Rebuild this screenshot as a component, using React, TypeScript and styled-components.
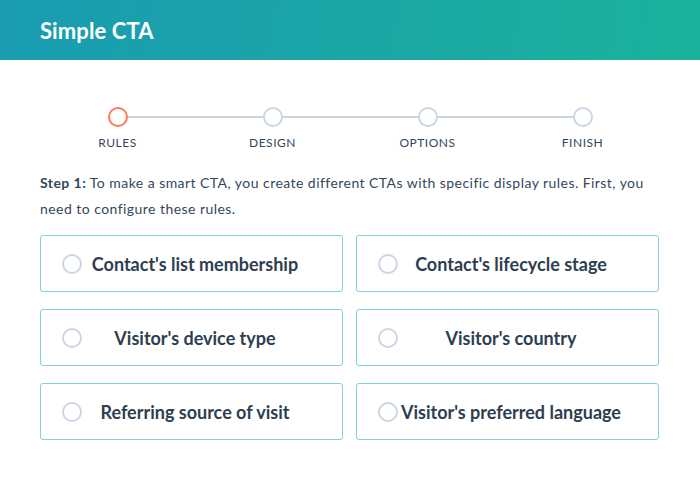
import React, { useState } from "react";
import styled, { createGlobalStyle } from "styled-components";

const GlobalStyle = createGlobalStyle`
  html, body {
    margin: 0;
    padding: 0;
    background: #fff;
  }
  body {
    font-family: "Lato", "Open Sans", sans-serif;
    color: #33475b;
  }
`;

const steps = ["Rules", "Design", "Options", "Finish"];

const rules = [
  "Contact's list membership",
  "Contact's lifecycle stage",
  "Visitor's device type",
  "Visitor's country",
  "Referring source of visit",
  "Visitor's preferred language",
];

const Root = styled.div`
  width: 700px;
  height: 480px;
  overflow: hidden;
`;

const Header = styled.header`
  height: 60px;
  display: flex;
  align-items: center;
  padding: 0 40px;
  background: linear-gradient(100deg, #1a9bb1 0%, #1ab29c 100%);
`;

const Title = styled.h1`
  margin: 0;
  font-size: 22px;
  font-weight: 700;
  color: #fff;
  letter-spacing: 0.1px;
`;

const Body = styled.main`
  padding: 47px 40px 0 40px;
`;

const Stepper = styled.ol`
  list-style: none;
  margin: 0;
  padding: 0;
  display: grid;
  grid-template-columns: repeat(4, 155px);
`;

const Step = styled.li<{ $last: boolean }>`
  position: relative;
  display: flex;
  flex-direction: column;
  align-items: center;
  gap: 8px;

  &::after {
    content: "";
    display: ${(p) => (p.$last ? "none" : "block")};
    position: absolute;
    top: 9px;
    left: 50%;
    width: 100%;
    height: 2px;
    background: #cbd6e2;
  }
`;

const StepDot = styled.span<{ $active: boolean }>`
  position: relative;
  z-index: 1;
  box-sizing: border-box;
  width: 20px;
  height: 20px;
  border-radius: 50%;
  background: #fff;
  border: 2px solid ${(p) => (p.$active ? "#ff7a59" : "#cbd6e2")};
`;

const StepLabel = styled.span`
  font-size: 12px;
  text-transform: uppercase;
  letter-spacing: 0.5px;
  color: #33475b;
`;

const Intro = styled.p`
  margin: 20px 0 13px;
  font-size: 14px;
  letter-spacing: 0.45px;
  line-height: 26px;
  color: #33475b;
`;

const Lead = styled.strong`
  font-weight: 700;
`;

const RuleGrid = styled.div`
  display: grid;
  grid-template-columns: 303px 303px;
  column-gap: 13px;
  row-gap: 17px;
`;

const RuleCard = styled.label<{ $checked: boolean }>`
  box-sizing: border-box;
  height: 57px;
  display: flex;
  align-items: center;
  padding: 0 34px 0 21px;
  border: 1px solid ${(p) => (p.$checked ? "#00a4bd" : "#7fd1da")};
  border-radius: 3px;
  background: #fff;
  cursor: pointer;
`;

const Radio = styled.span<{ $checked: boolean }>`
  flex: none;
  box-sizing: border-box;
  width: 20px;
  height: 20px;
  border-radius: 50%;
  border: 2px solid ${(p) => (p.$checked ? "#00a4bd" : "#cbd6e2")};
  background: #fff;
`;

const RuleText = styled.span`
  flex: 1;
  text-align: center;
  white-space: nowrap;
  font-size: 18px;
  font-weight: 700;
  color: #2d3e50;
`;

export default function App() {
  const [selected, setSelected] = useState<number | null>(null);

  return (
    <Root>
      <GlobalStyle />
      <Header>
        <Title>Simple CTA</Title>
      </Header>
      <Body>
        <Stepper>
          {steps.map((s, i) => (
            <Step key={s} $last={i === steps.length - 1}>
              <StepDot $active={i === 0} />
              <StepLabel>{s}</StepLabel>
            </Step>
          ))}
        </Stepper>
        <Intro>
          <Lead>Step 1:</Lead> To make a smart CTA, you create different CTAs
          with specific display rules. First, you need to configure these
          rules.
        </Intro>
        <RuleGrid>
          {rules.map((r, i) => (
            <RuleCard
              key={r}
              $checked={selected === i}
              onClick={() => setSelected(i)}
            >
              <Radio $checked={selected === i} />
              <RuleText>{r}</RuleText>
            </RuleCard>
          ))}
        </RuleGrid>
      </Body>
    </Root>
  );
}
